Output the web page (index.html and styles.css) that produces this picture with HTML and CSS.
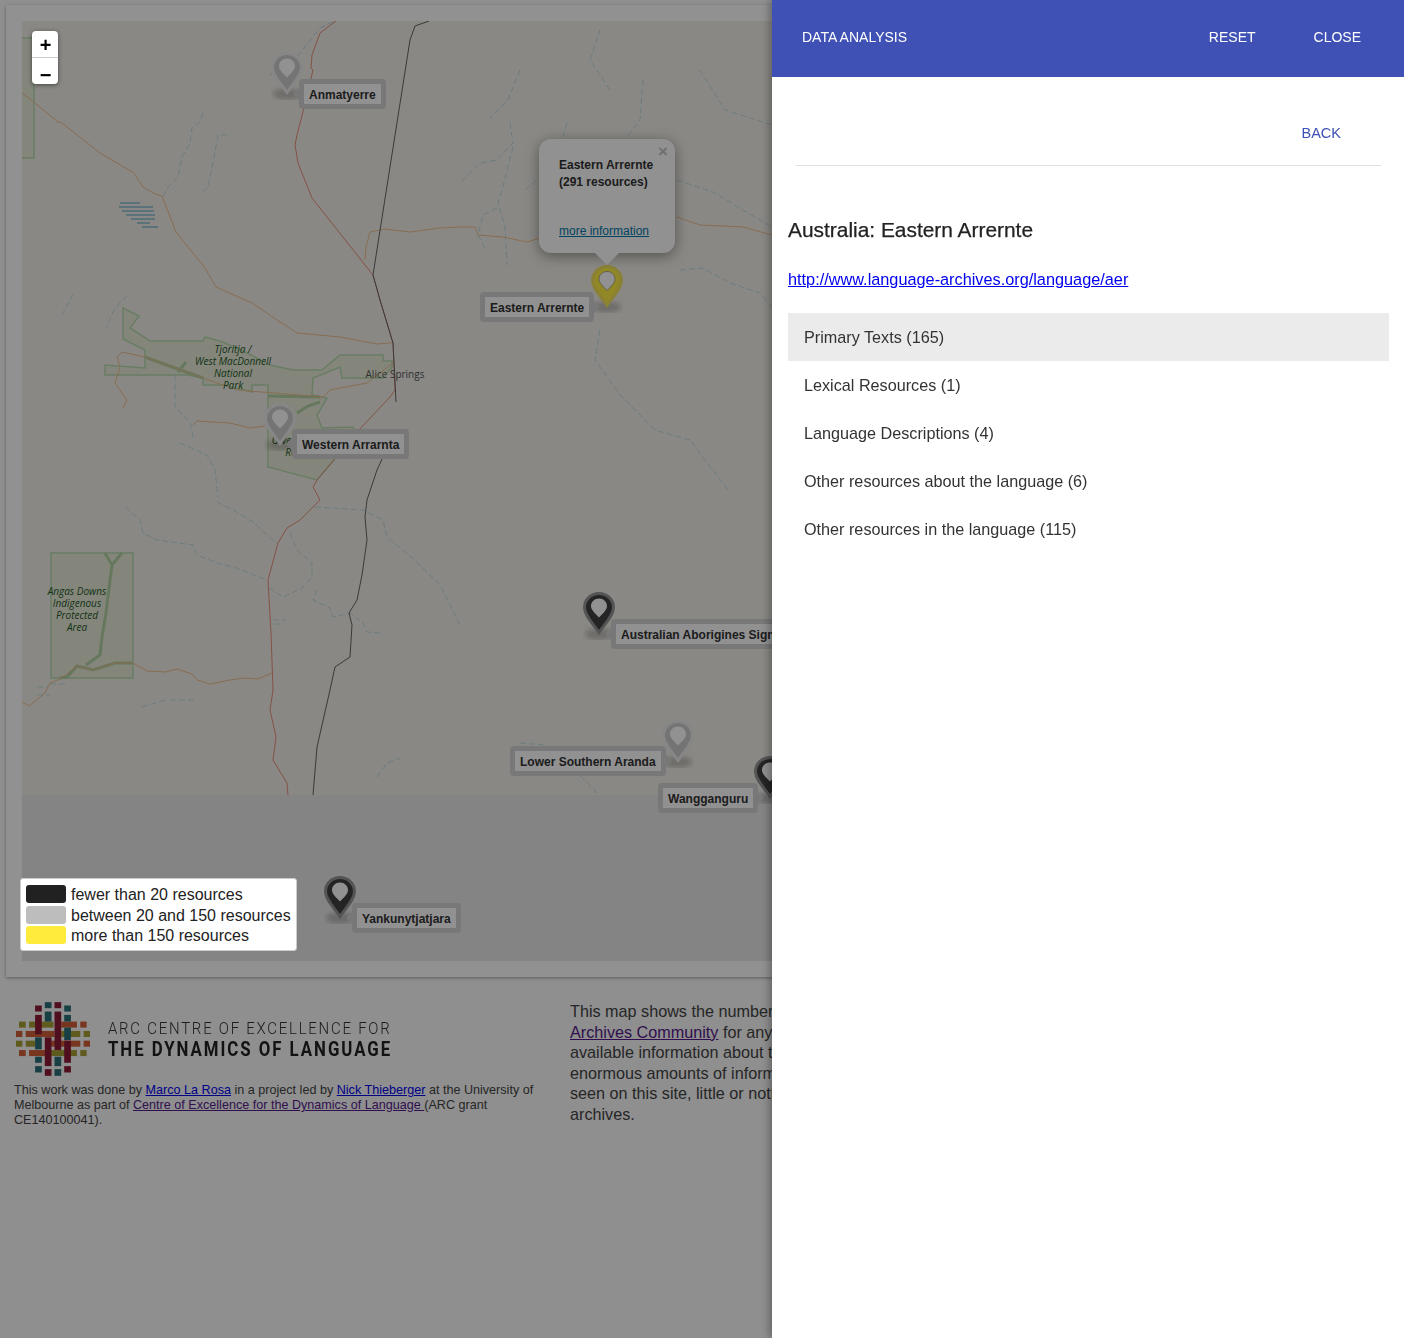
FILE: index.html
```html
<!DOCTYPE html>
<html lang="en">
<head>
<meta charset="utf-8">
<title>Language Archives Map</title>
<link rel="stylesheet" href="styles.css">
</head>
<body>
<svg class="defs" width="0" height="0" aria-hidden="true">
  <symbol id="pin" viewBox="0 0 32 48">
    <ellipse class="pin-shadow" cx="16" cy="42" rx="14" ry="5.500"/>
    <path class="pin-body" d="M16 1.5C7.8 1.5 1.5 7.8 1.5 15.5 1.5 24 10.500 32 16 40.500 21.500 32 30.500 24 30.500 15.500 30.500 7.800 24.200 1.500 16 1.500Z"/>
    <path class="pin-hole" d="M16 6.500c-4.400 0-8 3.300-8 7.500 0 4 4.200 7.600 8 11.500 3.800-3.900 8-7.500 8-11.500 0-4.200-3.600-7.500-8-7.500Z"/>
  </symbol>
</svg>

<main class="card">
  <section class="map">
    <svg class="tiles" width="750" height="774" viewBox="22 21 750 774" aria-hidden="true">
      <rect x="22" y="21" width="750" height="774" fill="#f2efe9"/>
      <g class="park">
        <path d="M22 38H34V158H22"/>
        <path d="M123 308L139 316 130 328 150 341H203L205 337 223 342 247 353 270 365 293 370H322L340 355H383V361H392V367L383 378H342L340 367 313 378 312 395 327 398 317 415 322 428 353 427 357 433 317 480 268 467V385H252V392L223 385H203V378L188 375H105V365L145 368V350L123 339Z"/>
        <rect x="51" y="553" width="82" height="125"/>
      </g>
      <g class="river">
        <path d="M145 357L175 368 203 378M178 372L186 362"/>
        <path d="M268 396L320 397M297 413L308 406 320 402"/>
        <path d="M105 553L112 565 122 553M112 565L110 580 106 613 102 637 100 655 86 665M60 678L67 677 77 666 93 670 115 663 133 663"/>
      </g>
      <g class="water">
        <path d="M203 113L200 122 192 128 190 143 182 157 178 177 168 187 163 197"/>
        <path d="M227 135H218L213 163 208 187 200 194"/>
        <path d="M333 22L320 28 297 57 270 75"/>
        <path d="M127 296L115 308 106 328M73 294L62 315"/>
        <path d="M510 123L513 143 497 160 480 163 460 183"/>
        <path d="M513 147L502 190 498 203 505 227 507 265"/>
        <path d="M497 208L483 215 478 235 485 248"/>
        <path d="M677 180L713 192 743 210 772 227"/>
        <path d="M680 270L703 268 730 283 760 293 772 307"/>
        <path d="M643 80L640 120 627 137M567 123L563 137M525 190L537 180M520 70L508 100 490 118"/>
        <path d="M700 70L725 110 772 125M610 90L590 60 600 30"/>
        <path d="M175 375V407L190 422 193 437M180 443L207 455 215 470 218 497"/>
        <path d="M600 330L595 360 620 395 655 430 690 440 728 490"/>
        <path d="M125 507L140 520 143 533 157 540 193 545 197 555 217 563 233 567 247 572 267 580"/>
        <path d="M217 502L233 510 253 522 267 535 277 543"/>
        <path d="M290 533L297 550 312 563V577L302 588 283 597 270 588"/>
        <path d="M317 590L313 600 330 608 333 617 350 613 363 623 367 632 380 633"/>
        <path d="M315 507L363 510 383 520 387 537 415 560 440 585 460 625"/>
        <path d="M377 777L387 763 400 758"/>
        <path d="M142 707L165 700M170 700L195 700M520 743L545 745 575 770 597 793"/>
        <path d="M37 687H48M37 695H50M50 684H66"/>
        <path d="M273 620H285M274 624H284"/>
      </g>
      <g class="lake">
        <path d="M120 203H140M119 207H153M122 211H154M126 215H155M131 219H155M137 223H150M142 227H158"/>
      </g>
      <g class="roads">
        <path d="M22 93L35 103 58 122 62 123 100 153 134 173 143 187 155 194 162 196 176 232 205 268 216 287 252 303 277 320 297 333 340 337 377 344 390 343 393 342"/>
        <path d="M122 352L145 357 203 378 237 390 323 397 330 390 367 383 380 373 393 363"/>
        <path d="M122 352L117 357 120 367 115 383 127 400 123 408"/>
        <path d="M193 425L197 421 230 423 250 428 265 426"/>
        <path d="M365 260L366 247 370 232 384 229 410 232 440 228 460 227 475 227 478 235 503 237 527 242 540 238M677 217L700 225 743 227 772 235"/>
        <path d="M22 702L29 706 45 693 50 683 60 679 77 666 93 670 115 663 133 663 147 671 165 672 177 669 192 674 197 680 210 684 230 680 245 678 258 679 272 673"/>
      </g>
      <path class="highway" d="M336 21L320 33 312 55 311 68 313 70 306 100 297 135 295 145 298 163 312 198 373 275 380 300 393 343 395 390 390 397 357 432 317 480 313 487 320 500 300 520 287 528 278 543 268 580 271 633 273 690 270 710 276 737 273 760 287 783 288 795"/>
      <path class="rail" d="M429 21L415 26 410 40 373 275 380 300 393 343 396 402M383 457L377 470 367 500 365 517 367 540 362 575 357 600 349 613 352 625 350 657 335 667 330 690 317 747 313 795"/>
      <g class="park-name">
        <text x="233" y="353">Tjoritja /</text>
        <text x="233" y="365">West MacDonnell</text>
        <text x="233" y="377">National</text>
        <text x="233" y="389">Park</text>
        <text x="302" y="444">Owen Springs</text>
        <text x="302" y="456">Reserve</text>
        <text x="77" y="595">Angas Downs</text>
        <text x="77" y="607">Indigenous</text>
        <text x="77" y="619">Protected</text>
        <text x="77" y="631">Area</text>
      </g>
      <text class="town" x="395" y="378">Alice Springs</text>
    </svg>

    <svg class="pin pin-grey at-anm"><use href="#pin"/></svg>
    <div class="tag tag-left tag-anm">Anmatyerre</div>

    <svg class="pin pin-yellow at-eas"><use href="#pin"/></svg>
    <div class="tag tag-right tag-eas">Eastern Arrernte</div>

    <svg class="pin pin-grey at-wes"><use href="#pin"/></svg>
    <div class="tag tag-left tag-wes">Western Arrarnta</div>

    <svg class="pin pin-dark at-aus"><use href="#pin"/></svg>
    <div class="tag tag-left tag-aus">Australian Aborigines Sign Language</div>

    <svg class="pin pin-grey at-low"><use href="#pin"/></svg>
    <div class="tag tag-right tag-low">Lower Southern Aranda</div>

    <svg class="pin pin-dark at-wan"><use href="#pin"/></svg>
    <div class="tag tag-right tag-wan">Wangganguru</div>

    <svg class="pin pin-dark at-yan"><use href="#pin"/></svg>
    <div class="tag tag-left tag-yan">Yankunytjatjara</div>

    <div class="popup">
      <span class="popup-close">×</span>
      <p class="popup-text">Eastern Arrernte<br>(291 resources)</p>
      <a class="popup-link" href="#">more information</a>
    </div>
  </section>

  <div class="zoom">
    <button class="zoom-btn zoom-in">+</button>
    <button class="zoom-btn zoom-out">−</button>
  </div>

  <div class="legend">
    <div class="legend-row"><span class="swatch swatch-dark"></span>fewer than 20 resources</div>
    <div class="legend-row"><span class="swatch swatch-grey"></span>between 20 and 150 resources</div>
    <div class="legend-row"><span class="swatch swatch-yellow"></span>more than 150 resources</div>
  </div>
</main>

<footer class="footer">
  <div class="credits">
    <div class="logo">
      <svg class="weave" width="74" height="74" viewBox="48 37 221 220" aria-hidden="true">
        <g fill="#a8a035">
          <rect x="57" y="95" width="20" height="18"/><rect x="87" y="95" width="73" height="18"/>
          <rect x="183" y="123" width="57" height="18"/><rect x="250" y="123" width="19" height="18"/>
          <rect x="48" y="152" width="19" height="18"/><rect x="77" y="152" width="28" height="18"/>
          <rect x="153" y="180" width="77" height="18"/><rect x="240" y="180" width="19" height="18"/>
        </g>
        <g fill="#d4603a">
          <rect x="183" y="95" width="47" height="18"/><rect x="240" y="95" width="19" height="18"/>
          <rect x="48" y="123" width="19" height="18"/><rect x="77" y="123" width="86" height="18"/>
          <rect x="153" y="152" width="87" height="18"/><rect x="250" y="152" width="19" height="18"/>
          <rect x="57" y="180" width="20" height="18"/><rect x="87" y="180" width="48" height="18"/>
        </g>
        <g fill="#2a6f78">
          <rect x="134" y="37" width="20" height="18"/><rect x="192" y="47" width="20" height="18"/>
          <rect x="134" y="65" width="20" height="30"/><rect x="192" y="75" width="20" height="20"/>
          <rect x="192" y="113" width="20" height="37"/>
          <rect x="105" y="142" width="20" height="36"/><rect x="105" y="200" width="20" height="18"/><rect x="105" y="228" width="20" height="19"/>
          <rect x="163" y="200" width="20" height="28"/><rect x="163" y="237" width="20" height="20"/>
        </g>
        <g fill="#8e1b35">
          <rect x="105" y="47" width="20" height="18"/><rect x="163" y="37" width="20" height="18"/>
          <rect x="105" y="75" width="20" height="58"/><rect x="163" y="65" width="20" height="115"/>
          <rect x="134" y="142" width="20" height="86"/><rect x="134" y="237" width="20" height="20"/>
          <rect x="192" y="152" width="20" height="66"/><rect x="192" y="228" width="20" height="19"/>
        </g>
      </svg>
      <div class="logo-type">
        <div class="logo-top">ARC CENTRE OF EXCELLENCE FOR</div>
        <div class="logo-bottom">THE DYNAMICS OF LANGUAGE</div>
      </div>
    </div>
    <p class="credit-text">This work was done by <a href="#">Marco La Rosa</a> in a project led by <a href="#">Nick Thieberger</a> at the University of Melbourne as part of <a class="visited" href="#">Centre of Excellence for the Dynamics of Language </a>(ARC grant CE140100041).</p>
  </div>
  <p class="about">This map shows the number of resources available for each language from the Open Language<br><a class="visited" href="#">Archives Community</a> for any language on the map. It gives a quick view of the<br>available information about that language and where it can be found. While there are<br>enormous amounts of information about some of the languages<br>seen on this site, little or nothing is held about others in these<br>archives.</p>
</footer>

<div class="backdrop"></div>

<aside class="panel">
  <header class="toolbar">
    <span class="toolbar-title">DATA ANALYSIS</span>
    <nav class="toolbar-actions">
      <a class="toolbar-btn" href="#">RESET</a>
      <a class="toolbar-btn" href="#">CLOSE</a>
    </nav>
  </header>
  <div class="back-row"><a class="back" href="#">BACK</a></div>
  <div class="detail">
    <h2 class="detail-title">Australia: Eastern Arrernte</h2>
    <a class="detail-link" href="#">http://www.language-archives.org/language/aer</a>
    <ul class="resources">
      <li class="resource resource-active">Primary Texts (165)</li>
      <li class="resource">Lexical Resources (1)</li>
      <li class="resource">Language Descriptions (4)</li>
      <li class="resource">Other resources about the language (6)</li>
      <li class="resource">Other resources in the language (115)</li>
    </ul>
  </div>
</aside>
</body>
</html>
```

FILE: styles.css
```css
* { box-sizing: border-box; }
html, body { height: 100%; }
html { overflow: hidden; }
body {
  margin: 0;
  padding: 5px 6px 0;
  background: #fbfbfb;
  color: #333;
  font-family: "Liberation Sans", Arial, sans-serif;
  font-size: 16px;
}
.defs { position: absolute; }

/* card + map */
.card {
  position: relative;
  height: 972px;
  padding: 16px;
  background: #fff;
  box-shadow: 0 1px 3px rgba(0, 0, 0, .35);
}
.map {
  position: relative;
  height: 940px;
  background: #e8e8e8;
  overflow: hidden;
}
.tiles { display: block; }
.park path, .park rect { fill: #e9ecd9; stroke: #b7dcae; stroke-width: 1.500; }
.river path { fill: none; stroke: #b2d3a4; stroke-width: 3; }
.water path { fill: none; stroke: #a9d0de; stroke-width: .8; stroke-dasharray: 6 3; opacity: .9; }
.lake path { fill: none; stroke: #a0c8d8; stroke-width: 2; }
.roads path { fill: none; stroke: #f0c090; stroke-width: 1; }
.highway { fill: none; stroke: #e8907a; stroke-width: 1; }
.rail { fill: none; stroke: #666; stroke-width: 1; }
.park-name text {
  fill: #1f5a2a;
  font-family: "Open Sans", sans-serif;
  font-size: 10px;
  font-style: italic;
  text-anchor: middle;
}
.town {
  fill: #555;
  font-family: "Open Sans", sans-serif;
  font-size: 10px;
  text-anchor: middle;
}

/* pins sit at their place on the map */
.pin { position: absolute; width: 32px; height: 48px; overflow: visible; }
.pin-shadow { fill: rgba(0, 0, 0, .2); filter: blur(2.500px); }
.pin-body { fill: var(--pin-fill); stroke: var(--pin-halo); stroke-width: 3; }
.pin-hole { fill: #fff; stroke: var(--pin-ring); stroke-width: .6; }
.pin-grey { --pin-fill: #cdcdcd; --pin-halo: #ececec; --pin-ring: none; }
.pin-dark { --pin-fill: #404040; --pin-halo: #959595; --pin-ring: none; }
.pin-yellow { --pin-fill: #ffee45; --pin-halo: #f2e362; --pin-ring: #777; }

.at-anm { left: 249px; top: 31px; }
.at-eas { left: 569px; top: 244px; }
.at-wes { left: 242px; top: 382px; }
.at-aus { left: 561px; top: 571px; }
.at-low { left: 640px; top: 699px; }
.at-wan { left: 732px; top: 735px; }
.at-yan { left: 302px; top: 855px; }

.tag {
  position: absolute;
  height: 30px;
  padding: 0 5px;
  border: 5px solid #d4d4d4;
  border-radius: 4px;
  background: #fff;
  color: #333;
  font-size: 12px;
  font-weight: 700;
  line-height: 22px;
  white-space: nowrap;
}
.tag::after {
  content: "";
  position: absolute;
  top: 4px;
  border: 6px solid transparent;
}
.tag-left::after { left: -17px; border-right-color: #d4d4d4; }
.tag-right::after { right: -17px; border-left-color: #d4d4d4; }

.tag-anm { left: 277px; top: 58px; }
.tag-eas { left: 458px; top: 271px; }
.tag-wes { left: 270px; top: 408px; }
.tag-aus { left: 589px; top: 598px; }
.tag-low { left: 488px; top: 725px; }
.tag-wan { left: 636px; top: 762px; }
.tag-yan { left: 330px; top: 882px; }

.popup {
  position: absolute;
  left: 517px;
  top: 118px;
  width: 136px;
  height: 114px;
  padding: 18px 20px;
  border-radius: 12px;
  background: #fff;
  box-shadow: 0 3px 14px rgba(0, 0, 0, .4);
  font-size: 12px;
}
.popup::after {
  content: "";
  position: absolute;
  left: 56px;
  top: 114px;
  border-style: solid;
  border-width: 12px 12px 0;
  border-color: #fff transparent transparent;
}
.popup-close {
  position: absolute;
  top: 4px;
  right: 7px;
  color: #c3c3c3;
  font-size: 17px;
  font-weight: 700;
  line-height: 18px;
}
.popup-text { margin: 0; font-weight: 700; line-height: 17px; }
.popup-link { display: block; margin-top: 32px; color: #0078a8; font-size: 12px; line-height: 16px; }

/* controls above the backdrop */
.zoom {
  position: absolute;
  left: 26px;
  top: 26px;
  z-index: 20;
  display: flex;
  flex-direction: column;
  width: 26px;
  border-radius: 4px;
  background: #fff;
  box-shadow: 0 1px 4px rgba(0, 0, 0, .5);
}
.zoom-btn {
  height: 26px;
  padding: 0;
  border: 0;
  background: none;
  color: #000;
  font-family: "Liberation Sans", sans-serif;
  font-size: 20px;
  font-weight: 700;
  line-height: 26px;
}
.zoom-in { height: 27px; padding: 1px 0 0 1px; border-bottom: 1px solid #ccc; }
.zoom-out { padding: 4px 0 0 1px; }
.legend {
  position: absolute;
  left: 14px;
  top: 873px;
  z-index: 20;
  width: 277px;
  height: 73px;
  padding: 6px 5px;
  border: 1px solid #ccc;
  border-radius: 3px;
  background: #fff;
  color: #222;
  font-size: 16px;
}
.legend-row { display: flex; align-items: center; gap: 5px; height: 20.500px; white-space: nowrap; }
.swatch { flex: none; width: 40px; height: 18px; margin-bottom: 2px; border-radius: 3px; }
.swatch-dark { background: #212121; }
.swatch-grey { background: #bdbdbd; }
.swatch-yellow { background: #ffeb3b; }

/* footer */
.footer {
  display: grid;
  grid-template-columns: 540px 1fr;
  gap: 16px;
  padding: 23px 0 0 8px;
}
.logo { display: flex; align-items: center; gap: 18px; padding-left: 2px; height: 78px; }
.weave { flex: none; }
.logo-type { margin-top: -1px; color: #222; font-family: Roboto, "Liberation Sans", sans-serif; white-space: nowrap; }
.logo-top { font-size: 17px; font-weight: 300; line-height: 21px; letter-spacing: 2px; color: #333; transform: scaleX(.88); transform-origin: left; }
.logo-bottom { font-size: 21px; font-weight: 700; line-height: 21px; letter-spacing: 2.450px; transform: scaleX(.8); transform-origin: left; }
.credit-text { margin: 5px 0 0; color: #444; font-size: 12.600px; line-height: 15px; }
.credit-text a { color: #0000ee; }
.credit-text a.visited, .about a.visited { color: #551a8b; }
.about { margin: 1px 0 0; color: #444; font-size: 16.200px; line-height: 20.500px; white-space: nowrap; }

/* backdrop + side panel */
.backdrop {
  position: fixed;
  inset: 0;
  z-index: 10;
  background: rgba(0, 0, 0, .43);
}
.panel {
  position: fixed;
  top: 0;
  right: 0;
  bottom: 0;
  z-index: 30;
  width: 632px;
  background: #fff;
  box-shadow: -3px 0 8px rgba(0, 0, 0, .3);
}
.toolbar {
  display: flex;
  align-items: center;
  justify-content: space-between;
  height: 77px;
  padding: 0 43px 3px 30px;
  background: #3f51b5;
  color: #fff;
  font-size: 14px;
  font-weight: 500;
}
.toolbar-actions { display: flex; gap: 58px; }
.toolbar-btn { color: #fff; text-decoration: none; }
.back-row {
  display: flex;
  align-items: center;
  justify-content: flex-end;
  height: 89px;
  margin: 0 23px 0 24px;
  padding: 24px 40px 0 0;
  border-bottom: 1px solid #e0e0e0;
}
.back { color: #3f51b5; font-size: 14.500px; text-decoration: none; }
.detail { padding: 0 15px 0 16px; }
.detail-title { margin: 51px 0 0; color: #222; font-size: 20.900px; font-weight: 500; line-height: 26px; -webkit-text-stroke: .25px #222; }
.detail-link { display: block; margin-top: 26px; color: #0000ee; font-size: 16.300px; line-height: 20px; }
.resources { margin: 24px 0 0; padding: 0; list-style: none; }
.resource { height: 48px; padding-left: 16px; color: #333; font-size: 16.200px; line-height: 48px; }
.resource-active { background: #ebebeb; }
```
